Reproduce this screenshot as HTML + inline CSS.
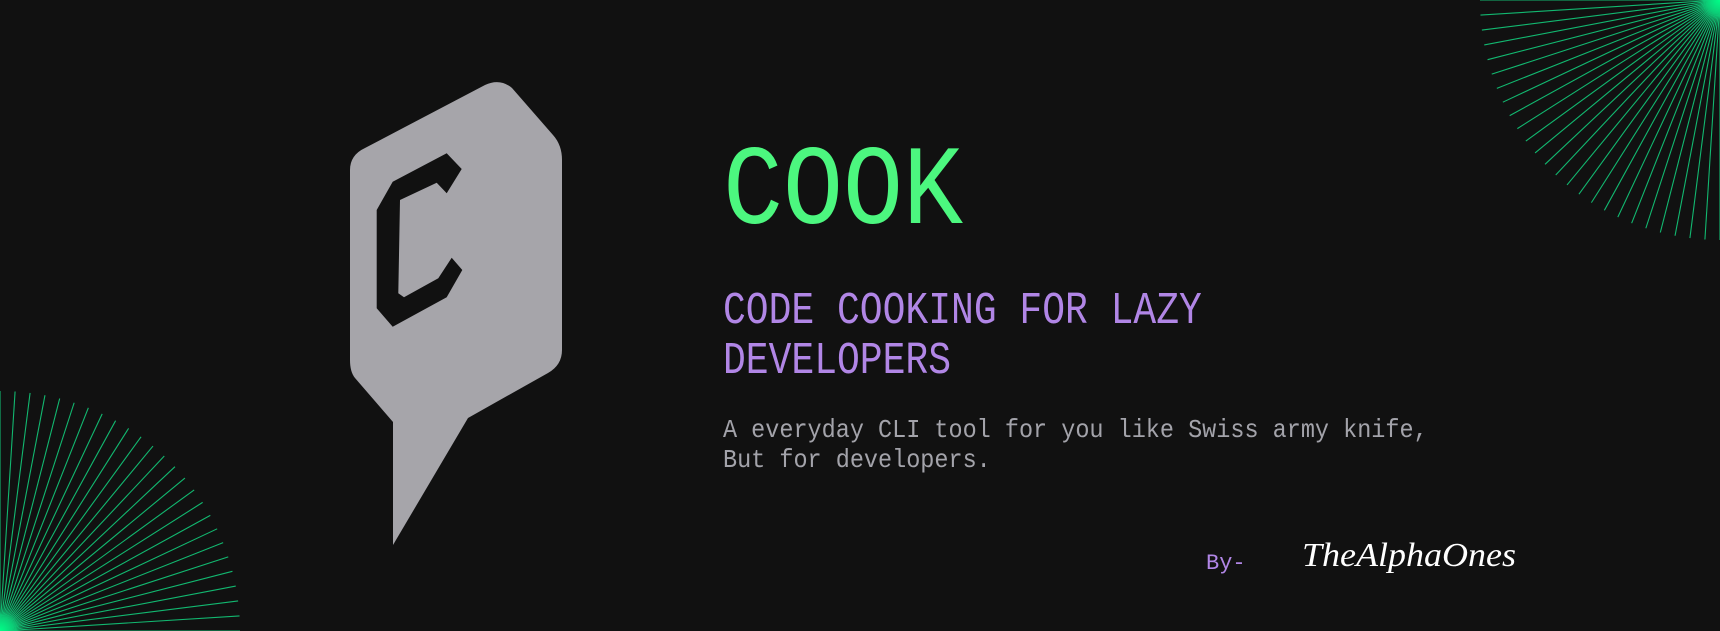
<!DOCTYPE html>
<html><head><meta charset="utf-8"><style>
html,body{margin:0;padding:0;background:#111111;}
body{width:1720px;height:631px;overflow:hidden;}
svg{display:block}
</style></head><body>
<svg id="s" width="1720" height="631" viewBox="0 0 1720 631" xmlns="http://www.w3.org/2000/svg">
<defs>
<radialGradient id="g1" cx="0.5" cy="0.5" r="0.5">
<stop offset="0" stop-color="#00ff88" stop-opacity="1"/>
<stop offset="1" stop-color="#00ff88" stop-opacity="0"/>
</radialGradient>
</defs>
<rect width="1720" height="631" fill="#111111"/>
<g id="rays" stroke="#12b870" stroke-width="1.1"></g>
<circle cx="1720" cy="0" r="20" fill="url(#g1)"/>
<circle cx="0" cy="631" r="20" fill="url(#g1)"/>

<path fill="#a6a5aa" d="M350,170 Q350,155 365,148 L485,85 Q500,78 512,88 L553,135 Q562,145 562,160 L562,350 Q562,365 548,373 L468,418 L393,545 L393,422 L355,378 Q350,372 350,360 Z"/>
<path fill="#111111" d="M446.7,153.3 L461.7,169 L446.7,193.3 L436.7,182.7 L400,200 L398.3,293.3 L404,297.3 L438.3,278.3 L451.7,257.7 L462.3,270 L446.7,297.3 L392.7,326.7 L376.7,308.3 L376.7,210 L392.7,181.7 Z"/>

<text transform="translate(723,223) scale(1,1.13)" font-family="Liberation Mono, monospace" font-size="100" fill="#4cf77f">COOK</text>
<text transform="translate(723,323) scale(1,1.2)" font-family="Liberation Mono, monospace" font-size="38" fill="#b186e6">CODE COOKING FOR LAZY</text>
<text transform="translate(723,373) scale(1,1.2)" font-family="Liberation Mono, monospace" font-size="38" fill="#b186e6">DEVELOPERS</text>
<text transform="translate(723,437) scale(1,1.1)" font-family="Liberation Mono, monospace" font-size="23.5" fill="#a3a3aa">A everyday CLI tool for you like Swiss army knife,</text>
<text transform="translate(723,467) scale(1,1.1)" font-family="Liberation Mono, monospace" font-size="23.5" fill="#a3a3aa">But for developers.</text>
<text x="1206" y="569" font-family="Liberation Mono, monospace" font-size="22" fill="#b186e6">By-</text>
<text x="1302" y="566" font-family="Liberation Serif, serif" font-style="italic" font-size="34" fill="#ffffff" textLength="214" lengthAdjust="spacingAndGlyphs">TheAlphaOnes</text>
</svg>
<script>
var g=document.getElementById('rays'),ns='http://www.w3.org/2000/svg',n=26,R=240;
for(var i=0;i<n;i++){var a=i*Math.PI/2/(n-1);
var l=document.createElementNS(ns,'line');l.setAttribute('x1',1720);l.setAttribute('y1',0);
l.setAttribute('x2',1720-R*Math.cos(a));l.setAttribute('y2',R*Math.sin(a));g.appendChild(l);
var m=document.createElementNS(ns,'line');m.setAttribute('x1',0);m.setAttribute('y1',631);
m.setAttribute('x2',R*Math.cos(a));m.setAttribute('y2',631-R*Math.sin(a));g.appendChild(m);}
</script>
</body></html>
